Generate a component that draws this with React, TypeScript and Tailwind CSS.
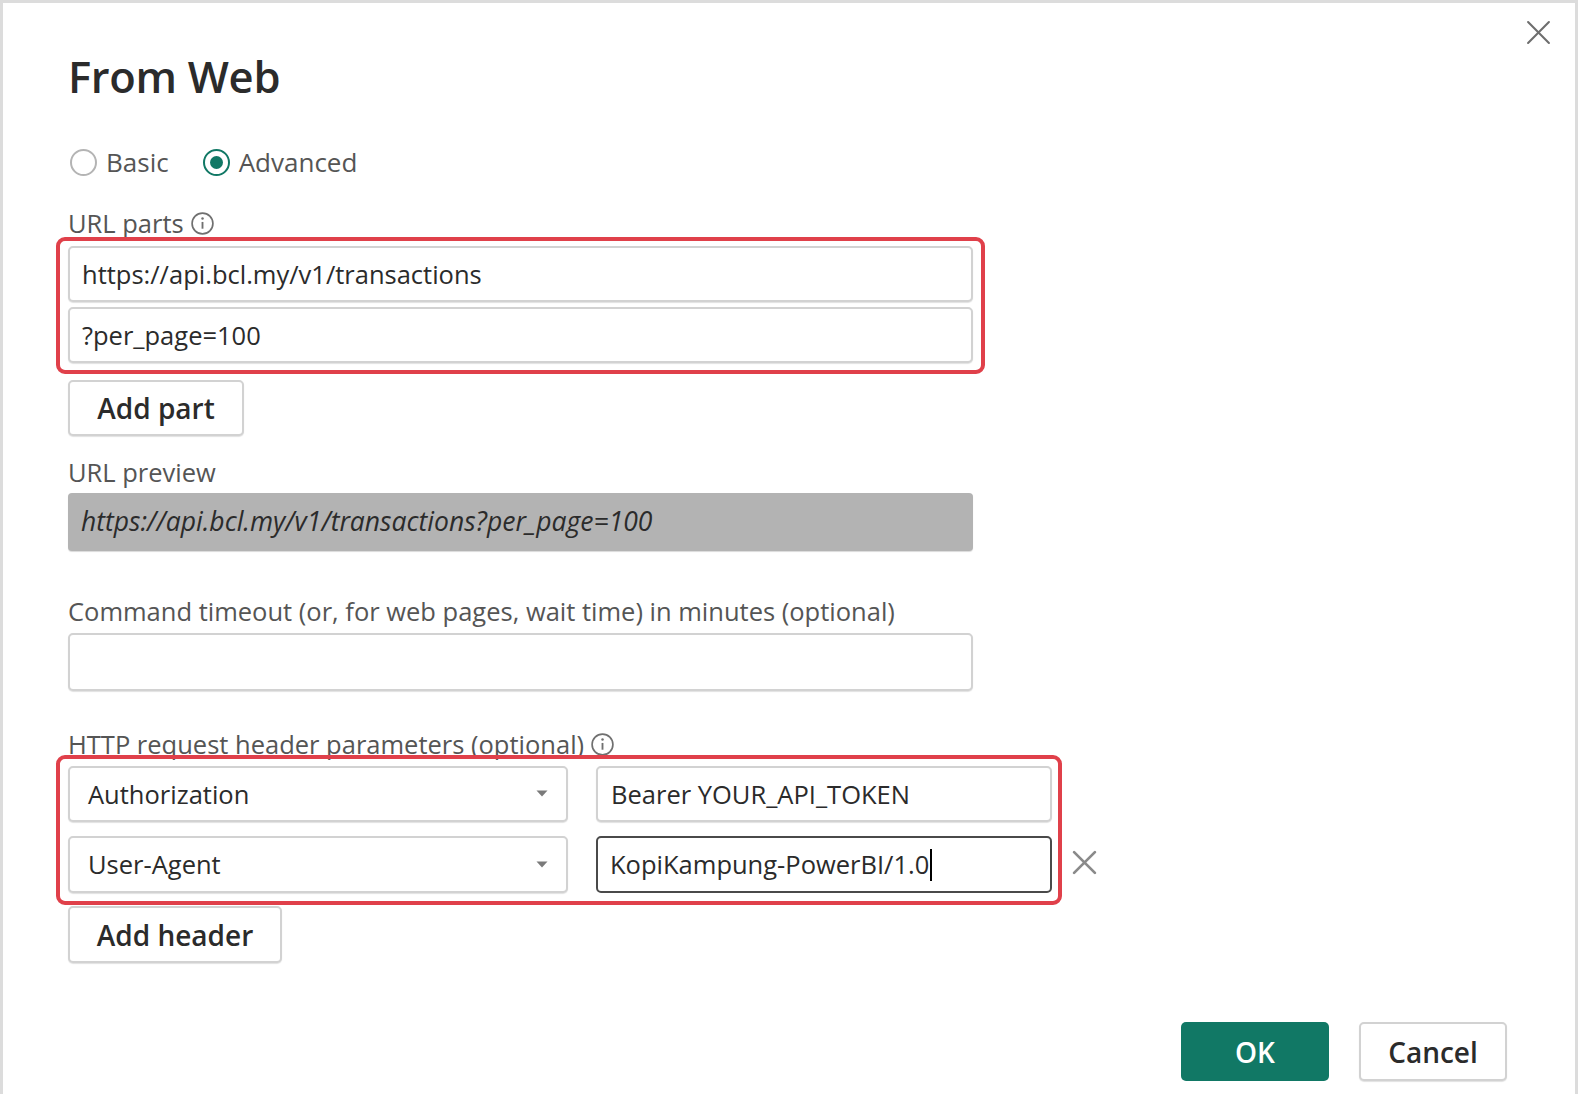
import React from "react";

const font = { fontFamily: '"Open Sans", "Noto Sans", "Liberation Sans", sans-serif' };

function InfoIcon() {
  return (
    <svg width="25" height="25" viewBox="0 0 24 24" className="inline-block">
      <circle cx="12" cy="12" r="10" fill="none" stroke="#707070" strokeWidth="1.6" />
      <line x1="12" y1="10.5" x2="12" y2="17" stroke="#707070" strokeWidth="1.8" />
      <circle cx="12" cy="7.3" r="1.2" fill="#707070" />
    </svg>
  );
}

function Caret() {
  return (
    <svg width="12" height="8" viewBox="0 0 12 8">
      <path d="M0.5 0.5 L11.5 0.5 L6 6.5 Z" fill="#7a7a7a" />
    </svg>
  );
}

function XIcon({ size, color, width }: { size: number; color: string; width: number }) {
  return (
    <svg width={size} height={size} viewBox="0 0 24 24">
      <path d="M2 2 L22 22 M22 2 L2 22" stroke={color} strokeWidth={width} strokeLinecap="round" />
    </svg>
  );
}

function TextBox({ value, className = "" }: { value?: string; className?: string }) {
  return (
    <div
      className={`box-border flex items-center rounded-[5px] border-2 border-[#d2d2d2] bg-white pl-[12px] text-[25.5px] text-[#2b2b2b] shadow-[0_1px_1px_rgba(0,0,0,0.12)] ${className}`}
    >
      {value}
    </div>
  );
}

export default function App() {
  return (
    <div
      style={font}
      className="relative h-[1094px] w-full overflow-hidden border-l-[3px] border-r-[3px] border-t-[3px] border-[#dcdcdc] bg-white"
    >
      {/* close */}
      <div className="absolute right-[24px] top-[17px]">
        <XIcon size={25} color="#6e6e6e" width={2} />
      </div>

      <div className="flex flex-col pl-[65px] pt-[49px]">
        <div className="h-[50px] text-[43.5px] font-semibold leading-[50px] tracking-[-0.3px] text-[#2b2b2b]">
          From Web
        </div>

        {/* radios */}
        <div className="mt-[44px] flex h-[32px] items-center text-[26px] text-[#555555]">
          <span className="ml-[2px] box-border h-[27px] w-[27px] rounded-full border-2 border-[#b4b4b4] bg-white" />
          <span className="ml-[9px]">Basic</span>
          <span className="ml-[34px] flex h-[27px] w-[27px] items-center justify-center rounded-full border-[2.5px] border-[#117865] bg-white">
            <span className="h-[13px] w-[13px] rounded-full bg-[#117865]" />
          </span>
          <span className="ml-[9px]">Advanced</span>
        </div>

        {/* URL parts */}
        <div className="mt-[30px] flex h-[30px] items-center gap-[6px] text-[25.5px] text-[#555555]">
          <span>URL parts</span>
          <InfoIcon />
        </div>
        <div className="-ml-[12px] mt-[-1px] box-border flex w-[929px] flex-col gap-[5px] rounded-[9px] border-4 border-[#e0404a] pb-[7px] pl-[8px] pr-[8px] pt-[5px]">
          <TextBox value="https://api.bcl.my/v1/transactions" className="h-[56px]" />
          <TextBox value="?per_page=100" className="h-[56px]" />
        </div>
        <button className="mt-[6px] box-border h-[56px] w-[176px] rounded-[5px] border-2 border-[#d2d2d2] bg-white text-[28px] font-semibold text-[#2b2b2b] shadow-[0_1px_1px_rgba(0,0,0,0.12)]">
          Add part
        </button>

        {/* URL preview */}
        <div className="mt-[21px] flex h-[30px] items-center text-[25.5px] text-[#555555]">URL preview</div>
        <div className="mt-[6px] box-border flex h-[58px] w-[905px] items-center rounded-[4px] bg-[#b3b3b3] pl-[13px] text-[26.5px] italic text-[#2b2b2b] shadow-[0_1px_1px_rgba(0,0,0,0.15)]">
          https://api.bcl.my/v1/transactions?per_page=100
        </div>

        {/* timeout */}
        <div className="mt-[45px] flex h-[30px] items-center text-[25.5px] text-[#555555]">
          Command timeout (or, for web pages, wait time) in minutes (optional)
        </div>
        <TextBox className="mt-[7px] h-[58px] w-[905px]" />

        {/* headers */}
        <div className="mt-[38px] flex h-[30px] items-center gap-[6px] text-[25.5px] text-[#555555]">
          <span>HTTP request header parameters (optional)</span>
          <InfoIcon />
        </div>
        <div className="-ml-[12px] mt-[-4px] flex items-end">
          <div className="box-border grid w-[1006px] grid-cols-[500px_456px] gap-x-[28px] gap-y-[14px] rounded-[9px] border-4 border-[#e0404a] pb-[8px] pl-[8px] pr-[6px] pt-[7px]">
            <div className="box-border flex h-[56px] items-center justify-between rounded-[5px] border-2 border-[#d2d2d2] bg-white pl-[18px] pr-[18px] text-[25.5px] text-[#2b2b2b] shadow-[0_1px_1px_rgba(0,0,0,0.12)]">
              <span>Authorization</span>
              <Caret />
            </div>
            <TextBox value="Bearer YOUR_API_TOKEN" className="h-[56px] pl-[13px]" />
            <div className="box-border flex h-[57px] items-center justify-between rounded-[5px] border-2 border-[#d2d2d2] bg-white pl-[18px] pr-[18px] text-[25.5px] text-[#2b2b2b] shadow-[0_1px_1px_rgba(0,0,0,0.12)]">
              <span>User-Agent</span>
              <Caret />
            </div>
            <div className="box-border flex h-[57px] items-center rounded-[5px] border-[2.5px] border-[#4a4a4a] bg-white pl-[12px] text-[25.5px] text-[#2b2b2b]">
              <span>KopiKampung-PowerBI/1.0</span>
              <span className="ml-[1px] h-[32px] w-[2px] bg-black" />
            </div>
          </div>
          <div className="mb-[30px] ml-[10px]">
            <XIcon size={25} color="#8a8a8a" width={2.6} />
          </div>
        </div>
        <button className="mt-[1px] box-border h-[57px] w-[214px] rounded-[5px] border-2 border-[#d2d2d2] bg-white text-[28px] font-semibold text-[#2b2b2b] shadow-[0_1px_1px_rgba(0,0,0,0.12)]">
          Add header
        </button>
      </div>

      {/* footer buttons */}
      <div className="mt-[59px] flex justify-end gap-[30px] pr-[68px]">
        <button className="box-border h-[59px] w-[148px] rounded-[5px] bg-[#117865] text-[28px] font-semibold text-white">
          OK
        </button>
        <button className="box-border h-[59px] w-[148px] rounded-[5px] border-2 border-[#d2d2d2] bg-white text-[28px] font-semibold text-[#2b2b2b] shadow-[0_1px_1px_rgba(0,0,0,0.12)]">
          Cancel
        </button>
      </div>
    </div>
  );
}
